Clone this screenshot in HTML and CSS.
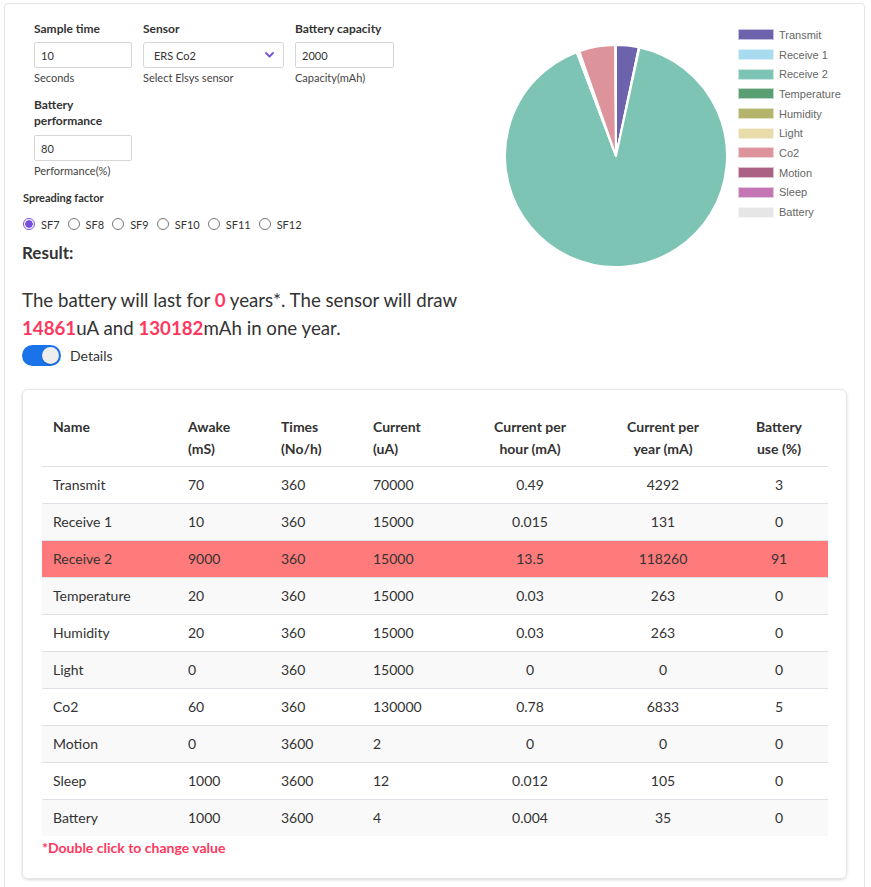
FILE: index.html
```html
<!DOCTYPE html>
<html>
<head>
<meta charset="utf-8">
<link rel="stylesheet" href="styles.css">
</head>
<body>
<div class="outer">
  <div class="top">
    <div class="left">
      <div class="fields">
        <div class="field w98">
          <label class="lbl">Sample time</label>
          <input class="inp" type="text" value="10">
          <div class="help">Seconds</div>
        </div>
        <div class="field w141">
          <label class="lbl">Sensor</label>
          <div class="select"><span>ERS Co2</span>
            <svg class="chev" width="9" height="6" viewBox="0 0 9 6"><path d="M1 1 L4.5 4.5 L8 1" fill="none" stroke="#7a4fe0" stroke-width="1.8" stroke-linecap="round" stroke-linejoin="round"/></svg>
          </div>
          <div class="help">Select Elsys sensor</div>
        </div>
        <div class="field w99">
          <label class="lbl">Battery capacity</label>
          <input class="inp" type="text" value="2000">
          <div class="help">Capacity(mAh)</div>
        </div>
      </div>
      <div class="fields row2">
        <div class="field w98">
          <label class="lbl">Battery performance</label>
          <input class="inp inp2" type="text" value="80">
          <div class="help">Performance(%)</div>
        </div>
      </div>
      <div class="sf-title">Spreading factor</div>
      <div class="radios">
        <label class="radio"><span class="dot checked"></span>SF7</label>
        <label class="radio"><span class="dot"></span>SF8</label>
        <label class="radio"><span class="dot"></span>SF9</label>
        <label class="radio"><span class="dot"></span>SF10</label>
        <label class="radio"><span class="dot"></span>SF11</label>
        <label class="radio"><span class="dot"></span>SF12</label>
      </div>
      <h3 class="result-title">Result:</h3>
      <p class="result">The battery will last for <b class="red">0</b> years*. The sensor will draw <b class="red">14861</b>uA and <b class="red">130182</b>mAh in one year.</p>
      <div class="switch-row">
        <span class="switch"><span class="knob"></span></span>
        <span class="switch-lbl">Details</span>
      </div>
    </div>
    <div class="right">
      <svg class="pie" width="226" height="226" viewBox="0 0 226 226">
        <g stroke="#fff" stroke-width="2" stroke-linejoin="round">
          <path d="M113 113 L113 2 A111 111 0 0 1 135.83 4.38 Z" fill="#6c63ac"/>
          <path d="M113 113 L135.83 4.38 A111 111 0 0 1 136.52 4.52 Z" fill="#a8dbf0"/>
          <path d="M113 113 L136.52 4.52 A111 111 0 1 1 73.68 9.19 Z" fill="#7dc4b5"/>
          <path d="M113 113 L73.68 9.19 A111 111 0 0 1 75.02 8.70 Z" fill="#5a9f73"/>
          <path d="M113 113 L75.02 8.70 A111 111 0 0 1 76.35 8.23 Z" fill="#b4b46c"/>
          <path d="M113 113 L76.35 8.23 A111 111 0 0 1 112.24 2 Z" fill="#dc939b"/>
          <path d="M113 113 L112.24 2 A111 111 0 0 1 112.83 2 Z" fill="#c476b4"/>
          <path d="M113 113 L112.83 2 A111 111 0 0 1 113 2 Z" fill="#e6e6e6"/>
        </g>
      </svg>
      <ul class="legend">
        <li><span class="box c1"></span>Transmit</li>
        <li><span class="box c2"></span>Receive 1</li>
        <li><span class="box c3"></span>Receive 2</li>
        <li><span class="box c4"></span>Temperature</li>
        <li><span class="box c5"></span>Humidity</li>
        <li><span class="box c6"></span>Light</li>
        <li><span class="box c7"></span>Co2</li>
        <li><span class="box c8"></span>Motion</li>
        <li><span class="box c9"></span>Sleep</li>
        <li><span class="box c10"></span>Battery</li>
      </ul>
    </div>
  </div>

  <div class="card">
    <table class="tbl">
      <colgroup>
        <col class="k1"><col class="k2"><col class="k3"><col class="k4"><col class="k5"><col class="k6"><col class="k7">
      </colgroup>
      <thead>
        <tr>
          <th>Name</th>
          <th>Awake<br>(mS)</th>
          <th>Times<br>(No/h)</th>
          <th>Current<br>(uA)</th>
          <th class="c">Current per<br>hour (mA)</th>
          <th class="c">Current per<br>year (mA)</th>
          <th class="c">Battery<br>use (%)</th>
        </tr>
      </thead>
      <tbody>
        <tr><td>Transmit</td><td>70</td><td>360</td><td>70000</td><td class="c">0.49</td><td class="c">4292</td><td class="c">3</td></tr>
        <tr class="st"><td>Receive 1</td><td>10</td><td>360</td><td>15000</td><td class="c">0.015</td><td class="c">131</td><td class="c">0</td></tr>
        <tr class="hl"><td>Receive 2</td><td>9000</td><td>360</td><td>15000</td><td class="c">13.5</td><td class="c">118260</td><td class="c">91</td></tr>
        <tr class="st"><td>Temperature</td><td>20</td><td>360</td><td>15000</td><td class="c">0.03</td><td class="c">263</td><td class="c">0</td></tr>
        <tr><td>Humidity</td><td>20</td><td>360</td><td>15000</td><td class="c">0.03</td><td class="c">263</td><td class="c">0</td></tr>
        <tr class="st"><td>Light</td><td>0</td><td>360</td><td>15000</td><td class="c">0</td><td class="c">0</td><td class="c">0</td></tr>
        <tr><td>Co2</td><td>60</td><td>360</td><td>130000</td><td class="c">0.78</td><td class="c">6833</td><td class="c">5</td></tr>
        <tr class="st"><td>Motion</td><td>0</td><td>3600</td><td>2</td><td class="c">0</td><td class="c">0</td><td class="c">0</td></tr>
        <tr><td>Sleep</td><td>1000</td><td>3600</td><td>12</td><td class="c">0.012</td><td class="c">105</td><td class="c">0</td></tr>
        <tr class="st"><td>Battery</td><td>1000</td><td>3600</td><td>4</td><td class="c">0.004</td><td class="c">35</td><td class="c">0</td></tr>
      </tbody>
    </table>
    <div class="note">*Double click to change value</div>
  </div>
</div>
</body>
</html>
```

FILE: styles.css
```css
* { box-sizing: border-box; }
body {
  margin: 0;
  padding: 3px 6px 0 4px;
  font-family: Lato, "Liberation Sans", sans-serif;
  color: #333;
  background: #fff;
}
.outer {
  border: 1px solid #e3e3e3;
  border-radius: 4px;
  padding: 17px 17px 20px 17px;
}
.top {
  display: flex;
  gap: 11px;
}
.left {
  width: 470px;
  flex: none;
}
.fields {
  display: flex;
  gap: 11px;
  padding-left: 12px;
}
.row2 { margin-top: 12px; }
.field { display: flex; flex-direction: column; }
.w98 { width: 98px; }
.w141 { width: 141px; }
.w99 { width: 99px; }
.lbl {
  font-size: 12px;
  font-weight: 700;
  line-height: 16px;
  margin-bottom: 5px;
  color: #333;
}
.inp {
  height: 26px;
  border: 1px solid #d6d6d6;
  border-radius: 2px;
  padding: 0 6px;
  font: 11px Lato, "Liberation Sans", sans-serif;
  color: #333;
  width: 100%;
}
.inp2 { margin-top: 1px; }
.select {
  height: 26px;
  border: 1px solid #d6d6d6;
  border-radius: 3px;
  padding: 0 9px 0 10px;
  font-size: 11px;
  display: flex;
  align-items: center;
  justify-content: space-between;
}
.help {
  font-size: 11px;
  line-height: 14px;
  margin-top: 3px;
  color: #444;
}
.sf-title {
  font-size: 11px;
  font-weight: 700;
  line-height: 16px;
  margin-top: 12px;
  margin-left: 1px;
}
.radios {
  display: flex;
  margin-top: 11px;
  height: 14px;
  align-items: center;
}
.radio {
  display: flex;
  align-items: center;
  font-size: 11px;
  margin-right: 7px;
  color: #333;
}
.dot {
  width: 12px;
  height: 12px;
  border: 1px solid #767676;
  border-radius: 50%;
  margin: 0 6px 0 1px;
  display: inline-block;
}
.dot.checked {
  border-color: #7a4fe0;
  background: radial-gradient(circle, #7a4fe0 0 3.5px, #fff 4px);
}
.result-title {
  font-size: 17px;
  font-weight: 700;
  margin: 10px 0 0 0;
  line-height: 24px;
}
.result {
  font-size: 18.7px;
  line-height: 28px;
  margin: 21px 0 0 0;
  color: #333;
}
.red { color: #ff3860; font-weight: 700; }
.switch-row {
  display: flex;
  align-items: center;
  gap: 9px;
  margin-top: 3px;
}
.switch {
  width: 39px;
  height: 21px;
  border-radius: 11px;
  background: #1a73e8;
  display: flex;
  align-items: center;
  justify-content: flex-end;
  padding-right: 2px;
}
.knob {
  width: 17px;
  height: 17px;
  border-radius: 50%;
  background: #eeeeee;
  box-shadow: 0 1px 1px rgba(0,0,0,.2);
}
.switch-lbl { font-size: 14px; color: #333; }
.right {
  display: flex;
  gap: 9px;
  align-items: flex-start;
}
.pie { margin-top: 22px; display: block; }
.legend {
  list-style: none;
  margin: 4px 0 0 0;
  padding: 0;
  font-family: "Liberation Sans", Arial, sans-serif;
  font-size: 11px;
  color: #666;
}
.legend li {
  height: 19.7px;
  display: flex;
  align-items: center;
}
.box {
  width: 36px;
  height: 11px;
  margin-right: 5px;
  border: 1px solid rgba(255,255,255,.6);
}
.c1 { background: #6c63ac; }
.c2 { background: #a8dbf0; }
.c3 { background: #7dc4b5; }
.c4 { background: #5a9f73; }
.c5 { background: #b4b46c; }
.c6 { background: #e8dcab; }
.c7 { background: #dc939b; }
.c8 { background: #aa6184; }
.c9 { background: #c476b4; }
.c10 { background: #e6e6e6; }

.card {
  margin-top: 23px;
  border: 1px solid #e6e6e6;
  border-radius: 6px;
  box-shadow: 0 1px 3px rgba(0,0,0,.15);
  padding: 15px 19px 20px 19px;
}
.tbl {
  width: 100%;
  border-collapse: collapse;
  table-layout: fixed;
  font-size: 14px;
  color: #333;
}
.k1 { width: 135px; }
.k2 { width: 93px; }
.k3 { width: 92px; }
.k4 { width: 102px; }
.k5 { width: 132px; }
.k6 { width: 134px; }
.k7 { width: 98px; }
.tbl th {
  text-align: left;
  font-weight: 700;
  line-height: 22px;
  padding: 11px 11px 6px 11px;
  vertical-align: top;
}
.tbl td {
  padding: 8px 11px;
  line-height: 20px;
  border-top: 1px solid #dee2e6;
}
.tbl .c { text-align: center; }
.tbl tr.st td { background: #f9f9f9; }
.tbl tr.hl td { background: #ff7a7a; }
.note {
  color: #ff3860;
  font-weight: 700;
  font-size: 14px;
  line-height: 20px;
  margin-top: 2px;
}
```
